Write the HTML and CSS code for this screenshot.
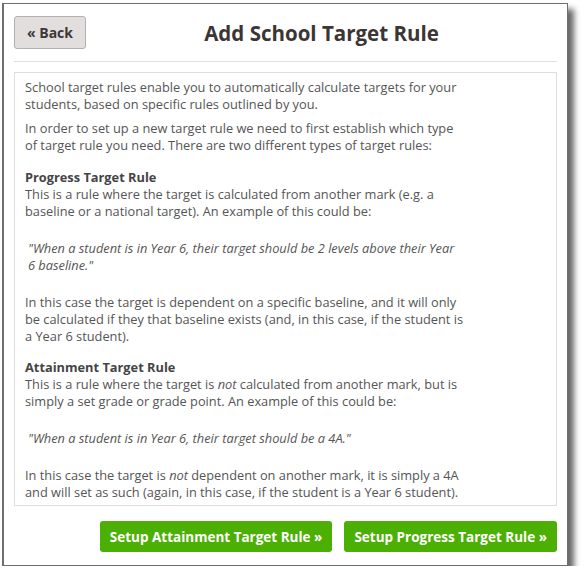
FILE: index.html
```html
<!DOCTYPE html>
<html>
<head>
<meta charset="utf-8">
<link rel="stylesheet" href="styles.css">
</head>
<body>
<div class="frame">
  <div class="header">
    <button class="back">« Back</button>
    <h1 class="title">Add School Target Rule</h1>
  </div>
  <div class="content">
    <p class="p1">School target rules enable you to automatically calculate targets for your students, based on specific rules outlined by you.</p>
    <p class="p2">In order to set up a new target rule we need to first establish which type of target rule you need. There are two different types of target rules:</p>
    <h2 class="rule-h">Progress Target Rule</h2>
    <p class="desc">This is a rule where the target is calculated from another mark (e.g. a baseline or a national target). An example of this could be:</p>
    <p class="quote">"When a student is in Year 6, their target should be 2 levels above their Year 6 baseline."</p>
    <p class="after">In this case the target is dependent on a specific baseline, and it will only be calculated if they that baseline exists (and, in this case, if the student is a Year 6 student).</p>
    <h2 class="rule-h rule-h2">Attainment Target Rule</h2>
    <p class="desc">This is a rule where the target is <em>not</em> calculated from another mark, but is simply a set grade or grade point. An example of this could be:</p>
    <p class="quote">"When a student is in Year 6, their target should be a 4A."</p>
    <p class="after last">In this case the target is <em>not</em> dependent on another mark, it is simply a 4A and will set as such (again, in this case, if the student is a Year 6 student).</p>
  </div>
  <div class="actions">
    <button class="go">Setup Attainment Target Rule »</button>
    <button class="go">Setup Progress Target Rule »</button>
  </div>
</div>
</body>
</html>
```
FILE: styles.css
```css
html, body {
  margin: 0;
  padding: 0;
  background: #fff;
}
body {
  font-family: "Open Sans", "Lato", sans-serif;
  color: #555;
}
.frame {
  box-sizing: border-box;
  margin: 3px 0 0 2px;
  width: 566px;
  height: 563px;
  border: 1px solid #6e6e6e;
  border-left-width: 2px;
  background: #fff;
  box-shadow: 6px 6px 6px rgba(0, 0, 0, 0.6);
  padding: 12px 10px 0 10px;
}
.header {
  display: flex;
  align-items: center;
  height: 33px;
  padding-bottom: 12px;
  border-bottom: 1px solid #ddd;
  margin: 0 0 10px 0;
}
.back {
  box-sizing: border-box;
  width: 72px;
  height: 33px;
  background: #e2dede;
  border: 1px solid #b5b0b0;
  border-radius: 3px;
  font-family: inherit;
  font-size: 14px;
  font-weight: bold;
  color: #3d3838;
  padding: 0;
}
.title {
  flex: 1;
  margin: 0;
  text-align: center;
  font-size: 20.5px;
  font-weight: bold;
  color: #3b3535;
}
.content {
  border: 1px solid #ddd;
  padding: 6px 10px 4px 10px;
  font-size: 12.8px;
  line-height: 17px;
}
.content p,
.content h2 {
  max-width: 440px;
}
.content p {
  margin: 0;
}
.content .quote {
  max-width: 435px;
}
.p1 {
  margin-bottom: 7px !important;
}
.rule-h {
  margin: 15px 0 0 0;
  font-size: 12.8px;
  line-height: 17px;
  font-weight: bold;
  color: #444;
}
.rule-h2 {
  margin-top: 14px;
}
.quote {
  font-style: italic;
  padding-left: 3px;
  margin: 20px 0 !important;
}
.actions {
  display: flex;
  justify-content: flex-end;
  gap: 12px;
  margin-top: 15px;
}
.go {
  height: 31px;
  background: #4caf04;
  border: none;
  border-radius: 3px;
  color: #fff;
  font-family: inherit;
  font-size: 13.5px;
  font-weight: bold;
  padding: 0 10px;
}
```
